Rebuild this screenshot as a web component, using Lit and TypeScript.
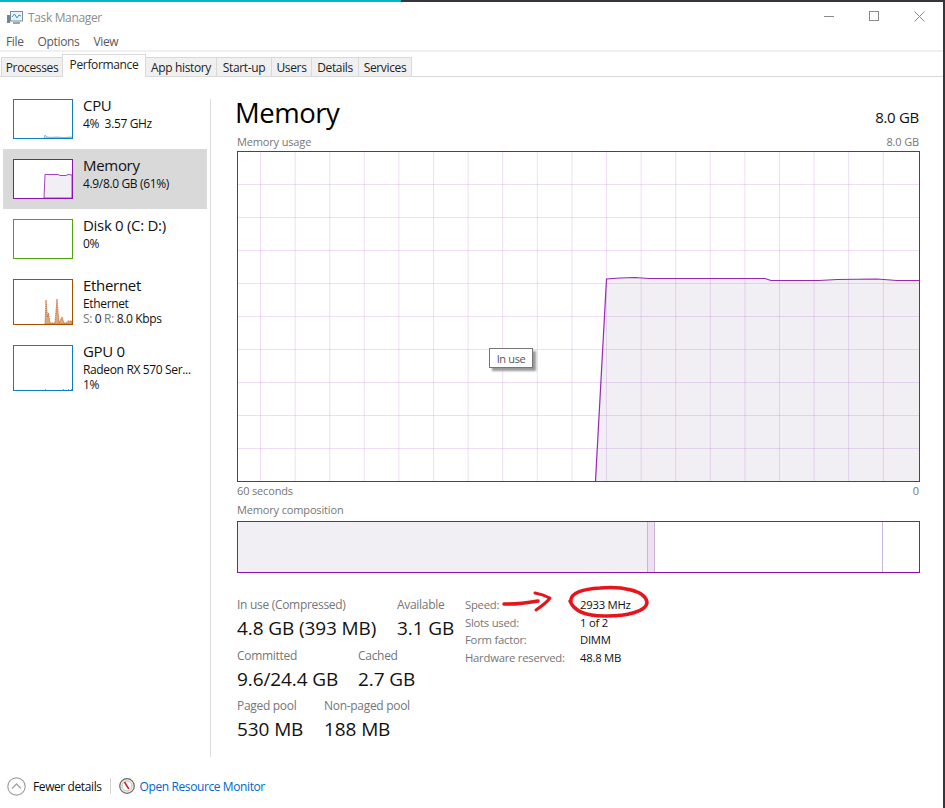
import { LitElement, html, css, svg } from "lit";
import { customElement } from "lit/decorators.js";

const range = (start: number, step: number, n: number) => Array.from({ length: n }, (_, i) => start + i * step);

@customElement("app-root")
export class AppRoot extends LitElement {
  static styles = css`
    :host { display: block; position: relative; width: 945px; height: 808px; overflow: hidden; background: #fff;
      border-right: 2px solid #33363a; box-sizing: border-box;
      font-family: "Open Sans", "Noto Sans", sans-serif; color: #1a1a1a; font-size: 12px; letter-spacing: -0.35px; }
    * { box-sizing: border-box; }
    svg { display: block; }
    .edge { display: flex; height: 2px; background: #33363a; }
    .edge i { display: block; width: 401px; background: #00b7c3; }
    .window { height: 806px; display: flex; flex-direction: column; }
    .title { height: 31px; display: flex; align-items: center; padding: 0 18px 0 7px; color: #8c8c8c; font-size: 12px; }
    .title span { margin-left: 5px; flex: 1; }
    .ctl { display: flex; gap: 35px; margin-top: -3px; }
    .menu { height: 17px; display: flex; gap: 14px; padding-left: 6px; align-items: center; color: #595959; font-size: 12px; }
    .sep { height: 2px; background: #f0f0f0; }
    .tabs { height: 25px; display: flex; align-items: flex-end; padding: 2px 0 0 1px; border-bottom: 1px solid #d9d9d9; }
    .tab { height: 19px; display: flex; align-items: center; justify-content: center; background: #f0f0f0;
      border: 1px solid #d9d9d9; border-bottom: none; color: #222; font-size: 12px; margin-right: -1px; }
    .tab.on { height: 23px; background: #fff; margin-bottom: -1px; padding-bottom: 3px; position: relative; z-index: 1; }
    .body { flex: 1; display: flex; }
    .side { width: 207px; padding: 12px 0 0 3px; }
    .item { display: flex; gap: 10px; padding: 10px; }
    .item.on { background: #d9d9d9; }
    .txt { margin: -1px 0 -2px; }
    .name { font-size: 15px; line-height: 15px; color: #111; letter-spacing: -0.3px; }
    .sub { font-size: 12px; line-height: 15px; margin-top: 3px; color: #111; white-space: nowrap; }
    .sub + .sub { margin-top: 0; }
    .sub b { font-weight: 400; color: #767676; }
    .divider { width: 1px; margin: 22px 0 0 3px; height: 658px; background: #dcdcdc; }
    .main { width: 682px; margin-left: 26px; }
    .head { height: 53px; display: flex; justify-content: space-between; align-items: flex-end; }
    .h1 { font-size: 27.5px; line-height: 38px; margin: 0 0 -2px -2px; color: #000; letter-spacing: -0.5px; }
    .gb { font-size: 15px; line-height: 20px; padding-bottom: 3px; color: #111; letter-spacing: -0.3px; }
    .lab { display: flex; justify-content: space-between; color: #767676; font-size: 11px; line-height: 14px; height: 14px; letter-spacing: -0.15px; }
    .caption { margin-top: 5px; }
    .graph { position: relative; width: 683px; height: 331px; margin-top: 2px; }
    .tip { position: absolute; left: 252px; top: 197px; width: 44px; height: 20px; background: #fff; border: 1px solid #767676;
      box-shadow: 3px 3px 2px #9a9a9a; color: #555; font-size: 11px; display: flex; align-items: center; justify-content: center; }
    .t60 { margin-top: 2px; }
    .tcomp { margin-top: 5px; }
    .comp { display: flex; width: 683px; height: 52px; border: 1px solid #8b12ae; margin-top: 4px; }
    .u { width: 409px; background: #f1eff4; }
    .c { width: 8px; background: #ebe2ef; border: solid #cdb4d8; border-width: 0 1px; }
    .a { width: 228px; border-right: 1px solid #cdb4d8; }
    .stats { display: flex; margin-top: 24px; }
    .left { width: 228px; }
    .stat .k { color: #767676; font-size: 12px; line-height: 16px; letter-spacing: -0.3px; }
    .stat .v { color: #111; font-size: 19px; line-height: 26px; letter-spacing: -0.1px; margin-top: 2px; white-space: nowrap; }
    .row { display: flex; }
    .row + .row { margin-top: 6.5px; }
    .w1 { width: 160px; }
    .w2 { width: 121px; }
    .w3 { width: 87px; }
    .specs { display: grid; grid-template-columns: 115px auto; grid-auto-rows: 17.7px; font-size: 11.3px; line-height: 17.7px; margin-top: -1px; align-content: start; letter-spacing: -0.25px; }
    .specs .k { color: #767676; }
    .specs .v { color: #111; }
    .foot { position: absolute; left: 7px; top: 777px; height: 18px; display: flex; align-items: center; font-size: 12px; color: #111; letter-spacing: -0.4px; }
    .foot .bar { width: 1px; height: 16px; background: #d4d4d4; margin: 0 8px; }
    .foot .link { color: #0066cc; margin-left: 5px; }
    .foot .fd { margin-left: 7px; }
    .ink { position: absolute; left: 495px; top: 580px; pointer-events: none; }
  `;

  private thumb(color: string, w: number, h: number, inner: unknown = "") {
    return html`<svg width=${w} height=${h} viewBox="0 0 ${w} ${h}">
      <rect width=${w} height=${h} fill="#fff" />
      ${inner}
      <rect x=".5" y=".5" width=${w - 1} height=${h - 1} fill="none" stroke=${color} />
    </svg>`;
  }

  private chart() {
    const line = "M358.5 330 L369.5 128 L383 127 L398 126.5 L412 127.5 L528 127.5 L534 129.5 L582 129.5 L600 128.5 L640 128 L660 129.5 L682 129.5";
    return html`<svg width="683" height="331" viewBox="0 0 683 331">
      <path d="${line} L682 330 Z" fill="#f1eff4" />
      ${range(23.5, 34.6, 19).map((x) => svg`<line x1=${x} x2=${x} y1="1" y2="330" stroke="#8b12ae" stroke-opacity=".14" />`)}
      ${range(33.5, 33, 9).map((y) => svg`<line x1="1" x2="682" y1=${y} y2=${y} stroke="#8b12ae" stroke-opacity=".14" />`)}
      <path d=${line} fill="none" stroke="#9628b8" stroke-width="1.2" />
      <rect x=".5" y=".5" width="682" height="330" fill="none" stroke="#8b12ae" />
    </svg>`;
  }

  render() {
    const side = [
      { n: "CPU", s: [html`4%&nbsp; 3.57 GHz`], c: "#117dbb", h: 40, g: svg`<path d="M31 39 L32 36 L34 38 L38 38.4 L44 38 L50 38.6 L59 38 L59 39 Z" fill="#d3e7f3" stroke="#6db0d8" stroke-width=".8" />` },
      { n: "Memory", s: [html`4.9/8.0 GB (61%)`], c: "#8b12ae", h: 40, on: true, g: svg`<path d="M31 39 L32 15.5 L45 15.5 L47 16.5 L53 16.5 L55 15.5 L59 16 L59 39 Z" fill="#f1eff4" stroke="#a045bd" stroke-width="1" />` },
      { n: "Disk 0 (C: D:)", s: [html`0%`], c: "#4da60c", h: 40, g: "" },
      { n: "Ethernet", s: [html`Ethernet`, html`<b>S:</b> 0 <b>R:</b> 8.0 Kbps`], c: "#a74f01", h: 46, g: svg`<path d="M32 45 L33 21 L34.5 38 L35.5 34 L37 44 L42 44 L44 20 L46 44 L47.5 41 L49 38 L51 44 L53 44 L55 42 L59 42 L59 45 Z" fill="#dba87f" stroke="#c56a2a" stroke-width=".8" stroke-dasharray="1.5 .6" />` },
      { n: "GPU 0", s: [html`Radeon RX 570 Ser...`, html`1%`], c: "#117dbb", h: 46, g: svg`<path d="M32 44.5 h1 M50 44.5 h1 M55 44.5 h1 M58 44.5 h1" stroke="#6db0d8" />` },
    ];
    return html`
      <div class="edge"><i></i></div>
      <div class="window">
        <div class="title">
          <svg width="16" height="16" viewBox="0 0 16 16">
            <rect x="0" y="5" width="3" height="8" fill="#6e8796" />
            <rect x="3.5" y="1.5" width="12" height="9.5" fill="#e8f3fa" stroke="#7d8c96" />
            <path d="M5 7 L7.5 4 L10 8 L12 5 L14 6" fill="none" stroke="#3f8fc7" />
            <rect x="6" y="12" width="7" height="2" fill="#9aa6ae" />
          </svg>
          <span>Task Manager</span>
          <div class="ctl">
            <svg width="10" height="10" viewBox="0 0 10 10"><path d="M0 5.5 H10" stroke="#8a8a8a" /></svg>
            <svg width="10" height="10" viewBox="0 0 10 10"><rect x=".5" y=".5" width="9" height="9" fill="none" stroke="#8a8a8a" /></svg>
            <svg width="11" height="11" viewBox="0 0 11 11"><path d="M.5 .5 L10.5 10.5 M10.5 .5 L.5 10.5" stroke="#8a8a8a" /></svg>
          </div>
        </div>
        <div class="menu"><span>File</span><span>Options</span><span>View</span></div>
        <div class="sep"></div>
        <div class="tabs">
          ${[["Processes", 62], ["Performance", 84], ["App history", 72], ["Start-up", 56], ["Users", 41], ["Details", 48], ["Services", 54]].map(
            ([t, w]) => html`<div class="tab ${t === "Performance" ? "on" : ""}" style="width:${w}px">${t}</div>`
          )}
        </div>
        <div class="body">
          <div class="side">
            ${side.map(
              (i) => html`<div class="item ${i.on ? "on" : ""}">
                ${this.thumb(i.c, 60, i.h, i.g)}
                <div class="txt">
                  <div class="name">${i.n}</div>
                  ${i.s.map((x) => html`<div class="sub">${x}</div>`)}
                </div>
              </div>`
            )}
          </div>
          <div class="divider"></div>
          <div class="main">
            <div class="head"><div class="h1">Memory</div><div class="gb">8.0 GB</div></div>
            <div class="lab caption"><span>Memory usage</span><span>8.0 GB</span></div>
            <div class="graph">${this.chart()}<div class="tip">In use</div></div>
            <div class="lab t60"><span>60 seconds</span><span>0</span></div>
            <div class="lab tcomp"><span>Memory composition</span></div>
            <div class="comp"><div class="u"></div><div class="c"></div><div class="a"></div></div>
            <div class="stats">
              <div class="left">
                <div class="row">
                  <div class="stat w1"><div class="k">In use (Compressed)</div><div class="v">4.8 GB (393 MB)</div></div>
                  <div class="stat"><div class="k">Available</div><div class="v">3.1 GB</div></div>
                </div>
                <div class="row">
                  <div class="stat w2"><div class="k">Committed</div><div class="v">9.6/24.4 GB</div></div>
                  <div class="stat"><div class="k">Cached</div><div class="v">2.7 GB</div></div>
                </div>
                <div class="row">
                  <div class="stat w3"><div class="k">Paged pool</div><div class="v">530 MB</div></div>
                  <div class="stat"><div class="k">Non-paged pool</div><div class="v">188 MB</div></div>
                </div>
              </div>
              <div class="specs">
                <span class="k">Speed:</span><span class="v">2933 MHz</span>
                <span class="k">Slots used:</span><span class="v">1 of 2</span>
                <span class="k">Form factor:</span><span class="v">DIMM</span>
                <span class="k">Hardware reserved:</span><span class="v">48.8 MB</span>
              </div>
            </div>
          </div>
        </div>
      </div>
      <div class="foot">
        <svg width="19" height="19" viewBox="0 0 19 19"><circle cx="9.5" cy="9.5" r="8.7" fill="#fff" stroke="#a0a0a0" stroke-width="1.2" /><path d="M5 11.5 L9.5 7 L14 11.5" fill="none" stroke="#a0a0a0" stroke-width="1.3" /></svg>
        <span class="fd">Fewer details</span>
        <span class="bar"></span>
        <svg width="16" height="16" viewBox="0 0 16 16"><circle cx="8" cy="8" r="7.3" fill="#f1eee6" stroke="#6a6a6a" stroke-width="1.2" /><circle cx="8" cy="8" r="5" fill="#fff" stroke="#c8c0b0" /><path d="M5.5 4 L9.8 11" stroke="#c8202a" stroke-width="1.5" /></svg>
        <span class="link">Open Resource Monitor</span>
      </div>
      <svg class="ink" width="160" height="42" viewBox="0 0 160 42" fill="none" stroke="#e8141c" stroke-linecap="round" stroke-linejoin="round">
        <path d="M9 24 C 20 24.5, 32 23, 43 21" stroke-width="3.5" />
        <path d="M40 13 C 46 14, 51 16, 55 18 C 52 22, 47 26, 41 30" stroke-width="3" />
        <path d="M76 22 C 74 12, 90 9, 105 8 C 125 6, 150 10, 152 22 C 152 32, 130 36, 112 36 C 95 36.5, 80 33, 75 21" stroke-width="3.5" />
      </svg>
    `;
  }
}
